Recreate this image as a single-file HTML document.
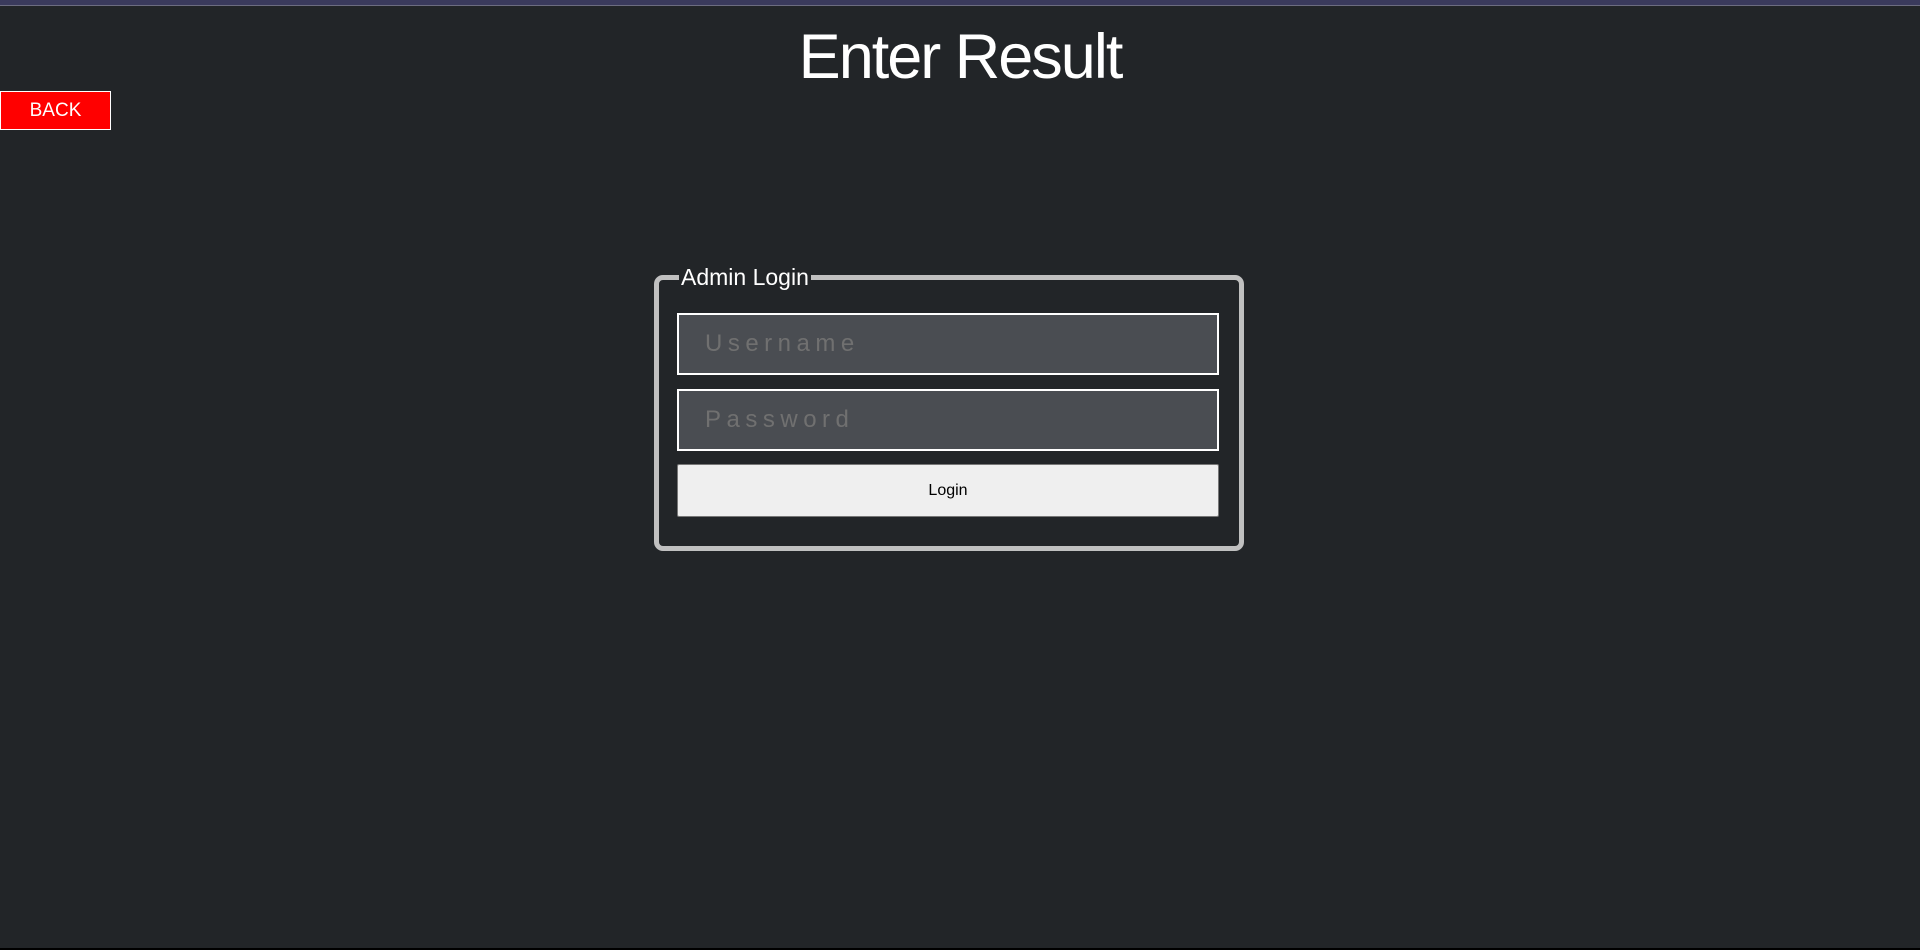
<!DOCTYPE html>
<html><head><meta charset="utf-8"><style>
*{box-sizing:border-box;margin:0;padding:0}
html,body{width:1920px;height:950px;overflow:hidden;background:#222528;font-family:"Liberation Sans",sans-serif}
.topbar{position:absolute;left:0;top:0;width:1920px;height:6px;background:#3a3a5c;border-bottom:1px solid #6c6c80}
.botline{position:absolute;left:0;bottom:0;width:1920px;height:2px;background:#000}
h1{position:absolute;left:0;top:22px;width:1920px;text-align:center;color:#fff;font-weight:normal;font-size:63px;letter-spacing:-2px;line-height:70px}
.back{position:absolute;left:0;top:91px;width:111px;height:39px;background:#f00;border:1px solid #fff;color:#fff;font-size:19px;text-align:center;line-height:37px}
.fs{position:absolute;left:654px;top:275px;width:590px;height:276px;border:5px solid #c0c0c0;border-radius:9px}
.legend{position:absolute;left:20px;top:-16px;background:#222528;color:#fff;font-size:23px;padding:0 2px;line-height:26px}
.inp{position:absolute;left:18px;width:542px;height:62px;background:#4a4d52;border:2px solid #fff;color:#707070;font-size:24px;letter-spacing:5.5px;padding-left:26px;line-height:58px}
.btn{position:absolute;left:18px;top:184px;width:542px;height:53px;background:#efefef;border:1px solid #777;border-radius:2px;color:#000;font-size:16px;text-align:center;line-height:51px}
</style></head><body>
<div class="topbar"></div>
<h1>Enter Result</h1>
<div class="back">BACK</div>
<div class="fs">
<div class="legend">Admin Login</div>
<div class="inp" style="top:33px">Username</div>
<div class="inp" style="top:109px">Password</div>
<div class="btn">Login</div>
</div>
<div class="botline"></div>
</body></html>
